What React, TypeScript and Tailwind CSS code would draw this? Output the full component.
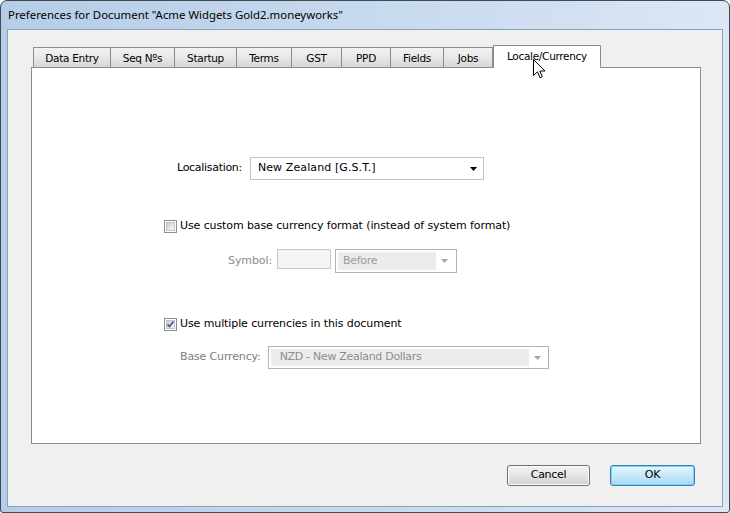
import React from "react";

const ui = { fontFamily: '"DejaVu Sans", Verdana, sans-serif' };
const titleFont = { fontFamily: '"Noto Sans", "Open Sans", sans-serif' };

function Arrow({ color = "#000" }: { color?: string }) {
  return (
    <svg width="7" height="4" viewBox="0 0 7 4">
      <path d="M0 0 H7 L3.5 4 Z" fill={color} />
    </svg>
  );
}

function Checkbox({ checked }: { checked?: boolean }) {
  return (
    <div className="relative w-[13px] h-[13px] border border-[#8e8f8f] bg-white p-px shrink-0">
      <div className="w-full h-full bg-gradient-to-br from-[#cbcfd5] to-[#f6f6f6] border border-[#c0c4ca]" />
      {checked && (
        <svg className="absolute left-[1px] top-[1px]" width="9" height="9" viewBox="0 0 9 9">
          <path d="M1.5 4.5 L3.5 6.5 L7.5 1.5" stroke="#4a5f97" strokeWidth="1.8" fill="none" />
        </svg>
      )}
    </div>
  );
}

const tabs: [string, number][] = [
  ["Data Entry", 78],
  ["Seq Nºs", 64],
  ["Startup", 62],
  ["Terms", 55],
  ["GST", 50],
  ["PPD", 49],
  ["Fields", 53],
  ["Jobs", 49],
];

export default function App() {
  return (
    <div className="w-[730px] h-[513px] bg-white" style={ui}>
      <div className="relative w-[730px] h-[513px] rounded-t-[7px] rounded-b-[3px] border border-[#3f4a55] bg-gradient-to-r from-[#b6cde7] via-[#c6d9ee] to-[#dbe7f4] flex flex-col px-[6px] pb-[5px]">
        {/* title */}
        <div className="h-[28px] flex items-center pl-[1px] text-[11.4px] text-black shrink-0" style={titleFont}>
          Preferences for Document "Acme Widgets Gold2.moneyworks"
        </div>
        {/* client */}
        <div className="flex-1 border border-[#8aa1bd] bg-[#f0f0f0] flex flex-col pt-[15px] pl-[23px] pr-[21px] text-[11px] tracking-[-0.3px]">
          {/* tab strip */}
          <div className="h-[22px] flex items-end pl-[2px] text-[10.5px]">
            {tabs.map(([t, w], i) => (
              <div
                key={t}
                className={`h-[20px] flex items-center justify-center border-t border-r border-[#898c95] bg-gradient-to-b from-[#f2f2f2] via-[#e8e8e8] to-[#d6d6d6] text-black pt-[3px] ${i === 0 ? "border-l" : ""}`}
                style={{ width: w }}
              >
                {t}
              </div>
            ))}
            <div className="relative z-10 -mb-px h-[23px] w-[108px] flex justify-center pt-[3px] border-t border-l border-r border-[#898c95] bg-white text-black">
              Locale/Currency
            </div>
          </div>
          {/* pane */}
          <div className="h-[377px] border border-[#898c95] bg-white flex flex-col">
            {/* Localisation */}
            <div className="mt-[89px] pl-[145px] flex items-center">
              <span className="text-black">Localisation:</span>
              <div className="ml-[8px] w-[234px] h-[23px] border border-[#c3c3c3] bg-white flex items-center pl-[7px] pr-[6px] justify-between">
                <span className="text-black tracking-[0.1px]">New Zealand [G.S.T.]</span>
                <Arrow />
              </div>
            </div>
            {/* custom format checkbox */}
            <div className="mt-[39px] pl-[132px] flex items-center h-[14px]">
              <Checkbox />
              <span className="ml-[3px] text-black tracking-[-0.1px]">Use custom base currency format (instead of system format)</span>
            </div>
            {/* symbol row */}
            <div className="mt-[16px] pl-[196px] flex items-start h-[24px]">
              <span className="text-[#8d8d8d] h-[20px] flex items-center mt-[2px] tracking-[-0.1px]">Symbol:</span>
              <div className="ml-[5px] w-[54px] h-[20px] border border-[#c9c9c9] bg-[#f4f4f4]" />
              <div className="ml-[4px] w-[122px] h-[24px] border border-[#b4b4b4] bg-white p-[2px] flex">
                <div className="flex-1 bg-[#ececec] flex items-center pl-[5px] text-[#9b9b9b]">Before</div>
                <div className="w-[18px] flex items-center justify-center">
                  <Arrow color="#a8a8a8" />
                </div>
              </div>
            </div>
            {/* multiple currencies */}
            <div className="mt-[44px] pl-[132px] flex items-center h-[14px]">
              <Checkbox checked />
              <span className="ml-[3px] text-black tracking-[-0.1px]">Use multiple currencies in this document</span>
            </div>
            {/* base currency */}
            <div className="mt-[15px] pl-[148px] flex items-center">
              <span className="text-[#7d7d7d] tracking-[-0.15px]">Base Currency:</span>
              <div className="ml-[7px] w-[281px] h-[23px] border border-[#b4b4b4] bg-white p-[2px] flex">
                <div className="flex-1 bg-[#ececec] flex items-center pl-[9px] text-[#8d8d8d]">NZD - New Zealand Dollars</div>
                <div className="w-[17px] flex items-center justify-center">
                  <Arrow color="#a8a8a8" />
                </div>
              </div>
            </div>
          </div>
          {/* buttons */}
          <div className="mt-[21px] flex justify-end pr-[6px] gap-[20px]">
            <button className="w-[83px] h-[21px] rounded-[3px] border border-[#707070] bg-gradient-to-b from-[#f2f2f2] via-[#e6e6e6] to-[#cfcfcf] text-black text-[11px] flex items-center justify-center shadow-[inset_0_0_0_1px_#fcfcfc]">
              Cancel
            </button>
            <button className="w-[85px] h-[21px] rounded-[3px] border border-[#3c7fb1] bg-gradient-to-b from-[#eaf6fd] via-[#c7e8fc] to-[#a7d9f5] text-black text-[11px] flex items-center justify-center shadow-[inset_0_0_0_1px_#78d3f5]">
              OK
            </button>
          </div>
        </div>
        {/* cursor */}
        <svg className="absolute z-20 left-[532px] top-[58px]" width="13" height="20" viewBox="0 0 13 20">
          <path d="M0.5 0.5 V16.5 L4.5 12.8 L7 18.8 L9.3 17.8 L6.9 12 H12 Z" fill="#fff" stroke="#000" strokeWidth="1" strokeLinejoin="round" />
        </svg>
      </div>
    </div>
  );
}
